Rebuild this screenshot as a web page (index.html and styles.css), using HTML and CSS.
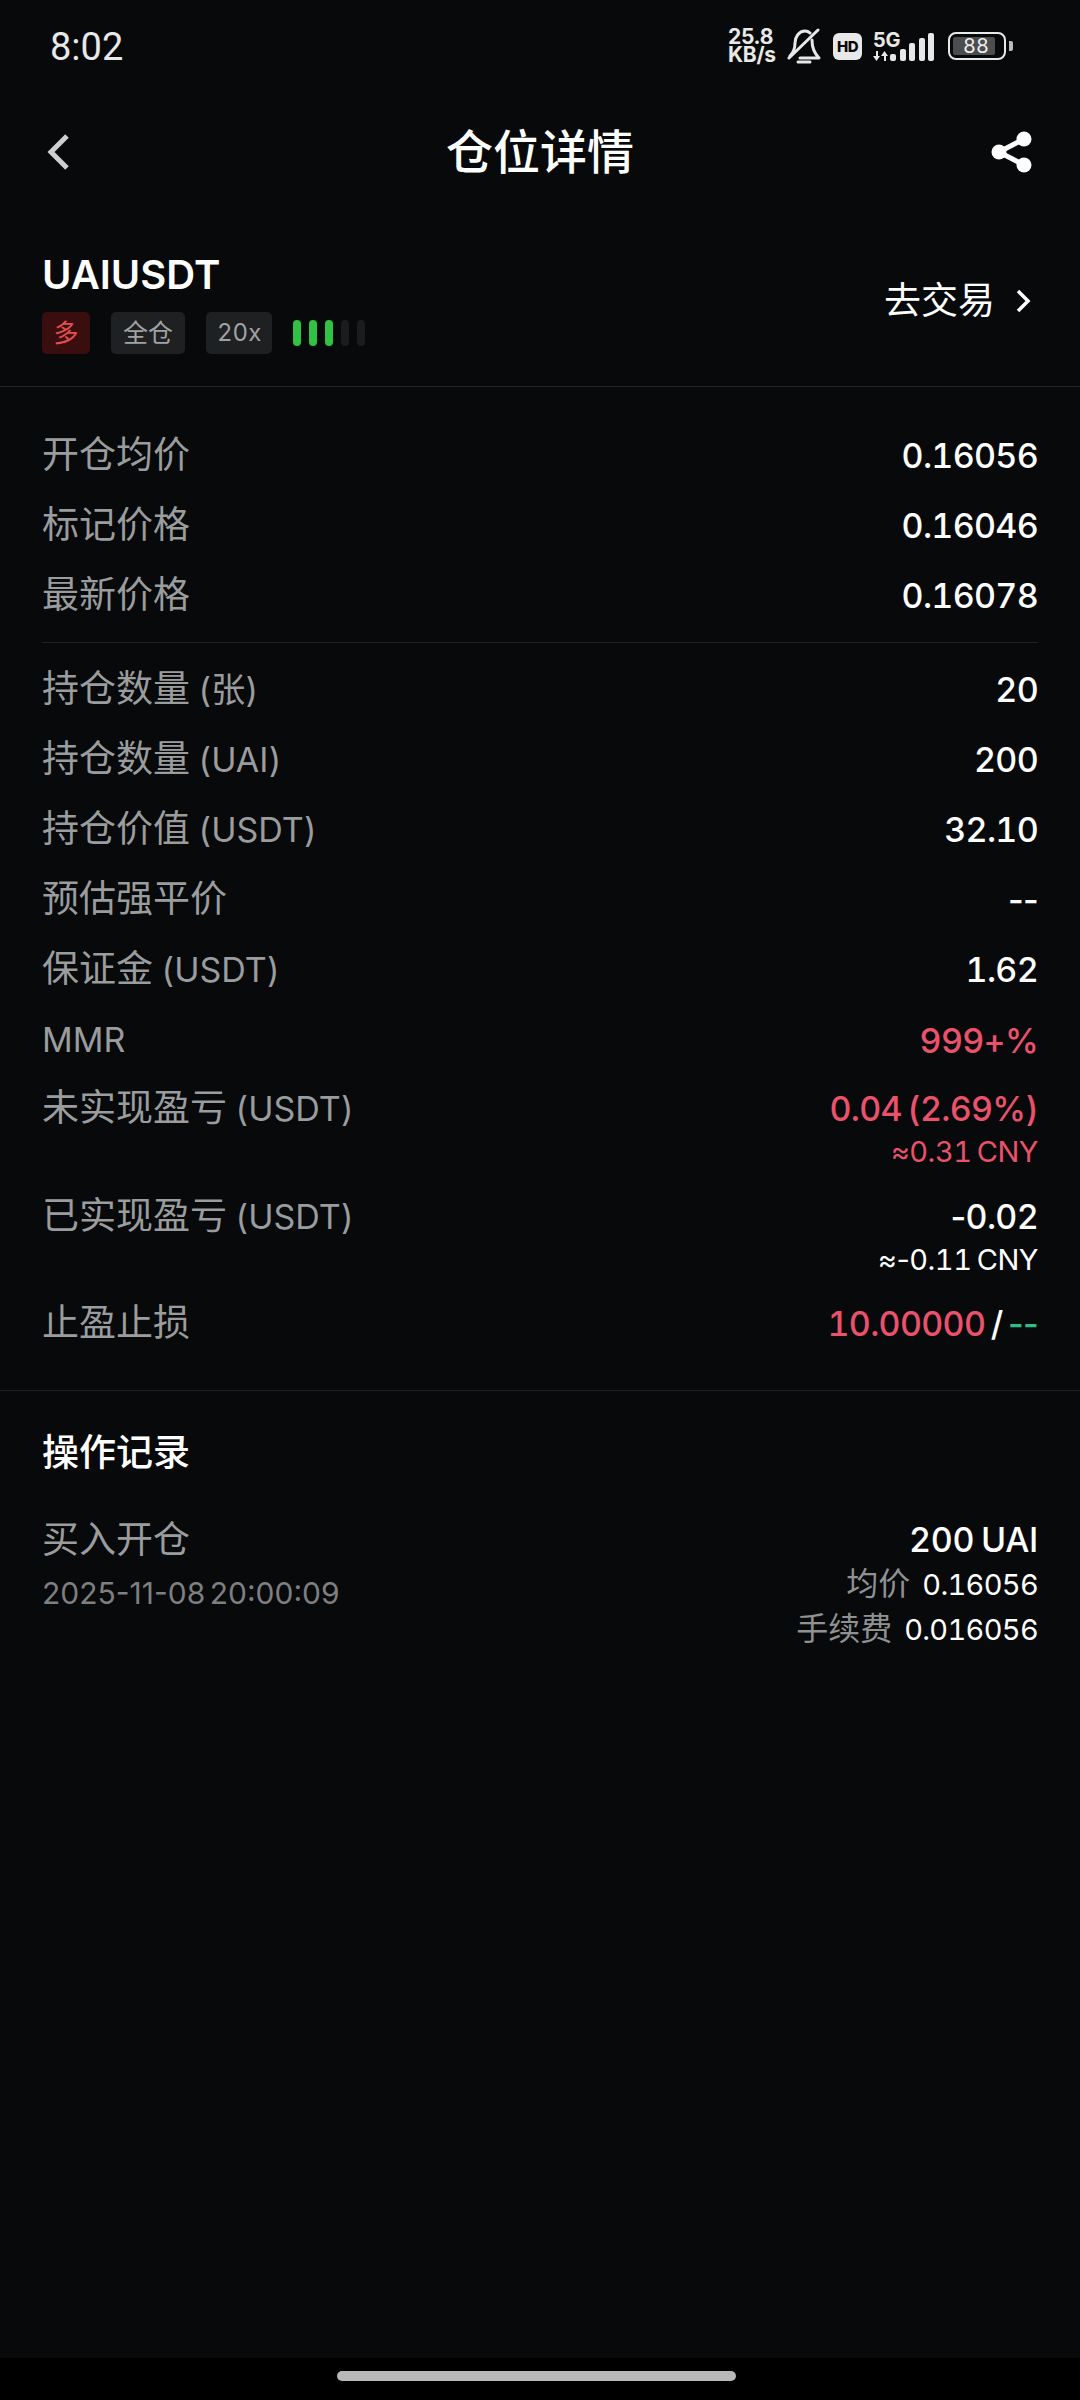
FILE: index.html
```html
<!DOCTYPE html>
<html lang="zh-CN">
<head>
  <meta charset="UTF-8" />
  <meta name="viewport" content="width=device-width, initial-scale=1.0" />
  <title>仓位详情</title>
  <link rel="stylesheet" href="styles.css">
</head>
<body>
  <div class="status-bar">
    <span class="clock">8:02</span>
    <div class="status-icons">
      <div class="speed">25.8<br>KB/s</div>
      <svg class="bell" viewBox="0 0 34 36" fill="none" stroke="#e8e8e8" stroke-width="3" stroke-linecap="round" stroke-linejoin="round">
        <path d="M8 15c0-6 4-12 10-12 2 0 4 1 5 2M25 12c0 7 2 13 7 18H13M8 15c0 6-2 10-5 13"/>
        <path d="M11 34h12"/>
        <path d="M2 30 31 2"/>
      </svg>
      <div class="hd">HD</div>
      <div class="network">
        <div class="net-labels">
          <span class="five-g">5G</span>
          <svg class="net-arrows" viewBox="0 0 15 10" fill="#e8e8e8"><path d="M0 5h3V0h2v5h2l-3.500 5zM8 5l3.500-5L15 5h-2v5h-2V5z"/></svg>
        </div>
        <div class="signal">
          <i class="b1"></i><i class="b2"></i><i class="b3"></i><i class="b4"></i><i class="b5"></i>
        </div>
      </div>
      <div class="battery">
        <div class="battery-body"><span class="battery-level">88</span></div>
        <div class="battery-nub"></div>
      </div>
    </div>
  </div>

  <header class="topbar">
    <svg class="back" viewBox="0 0 22 36" fill="none" stroke="#cfcfcf" stroke-width="5"><path d="M20 2 4 18l16 16"/></svg>
    <h1>仓位详情</h1>
    <svg class="share" viewBox="0 0 42 42" fill="#fff">
      <circle cx="33" cy="8" r="7.500"/><circle cx="33" cy="34" r="7.500"/><circle cx="8" cy="21" r="7.500"/>
      <path d="M8 21 33 8M8 21l25 13" stroke="#fff" stroke-width="5"/>
    </svg>
  </header>

  <section class="symbol">
    <div>
      <div class="symbol-name">UAIUSDT</div>
      <div class="tags">
        <span class="tag tag-long">多</span>
        <span class="tag">全仓</span>
        <span class="tag tag-lever">20x</span>
        <div class="risk">
          <i class="on"></i><i class="on"></i><i class="on"></i><i></i><i></i>
        </div>
      </div>
    </div>
    <div class="trade-link">
      去交易
      <svg viewBox="0 0 16 24" fill="none" stroke="#fff" stroke-width="3.500"><path d="M3 2l10 10L3 22"/></svg>
    </div>
  </section>

  <main class="details">
    <div class="group group-prices">
      <div class="row"><span class="label">开仓均价</span><span class="value">0.16056</span></div>
      <div class="row"><span class="label">标记价格</span><span class="value">0.16046</span></div>
      <div class="row"><span class="label">最新价格</span><span class="value">0.16078</span></div>
    </div>
    <div class="inner-line"></div>
    <div class="group group-position">
      <div class="row"><span class="label">持仓数量 <span class="unit">(张)</span></span><span class="value">20</span></div>
      <div class="row"><span class="label">持仓数量 <span class="unit">(UAI)</span></span><span class="value">200</span></div>
      <div class="row"><span class="label">持仓价值 <span class="unit">(USDT)</span></span><span class="value">32.10</span></div>
      <div class="row"><span class="label">预估强平价</span><span class="value plain">--</span></div>
      <div class="row"><span class="label">保证金 <span class="unit">(USDT)</span></span><span class="value">1.62</span></div>
      <div class="row row-short"><span class="label unit">MMR</span><span class="value red">999+%</span></div>
      <div class="row row-tall">
        <span class="label">未实现盈亏 <span class="unit">(USDT)</span></span>
        <div class="value-stack">
          <span class="value red">0.04 (2.69%)</span>
          <span class="sub red">≈0.31 CNY</span>
        </div>
      </div>
      <div class="row row-tall">
        <span class="label">已实现盈亏 <span class="unit">(USDT)</span></span>
        <div class="value-stack">
          <span class="value"><span class="plain">-</span>0.02</span>
          <span class="sub"><span class="plain">≈-</span>0.11 CNY</span>
        </div>
      </div>
      <div class="row">
        <span class="label">止盈止损</span>
        <span class="value"><span class="red">10.00000</span> / <span class="green plain">--</span></span>
      </div>
    </div>
  </main>

  <section class="records">
    <h2>操作记录</h2>
    <div class="record">
      <div>
        <div class="record-type">买入开仓</div>
        <div class="record-time">2025-11-08 20:00:09</div>
      </div>
      <div class="record-info">
        <div class="record-amount">200 UAI</div>
        <div class="record-line"><span class="record-key">均价</span>0.16056</div>
        <div class="record-line"><span class="record-key">手续费</span>0.016056</div>
      </div>
    </div>
  </section>

  <div class="nav-bar"><div class="nav-pill"></div></div>
</body>
</html>
```

FILE: styles.css
```css
html, body {
  margin: 0;
  padding: 0;
  width: 1080px;
  height: 2400px;
  overflow: hidden;
}
body {
  display: flex;
  flex-direction: column;
  background: #07090a;
  color: #fff;
  font-family: Inter, "Noto Sans CJK SC", sans-serif;
  font-variant-numeric: tabular-nums;
}
.plain {
  font-variant-numeric: normal;
  font-feature-settings: "tnum" 0;
}

.status-bar {
  height: 92px;
  box-sizing: border-box;
  padding: 0 67px 0 50px;
  display: flex;
  align-items: center;
  justify-content: space-between;
  color: #e8e8e8;
}
.clock {
  font-size: 38px;
  font-family: Roboto, sans-serif;
  padding-top: 2px;
}
.status-icons {
  display: flex;
  align-items: center;
}
.speed {
  font-size: 21px;
  font-weight: 700;
  line-height: 18px;
  width: 59px;
  letter-spacing: -0.3px;
  font-variant-numeric: normal;
}
.bell {
  width: 34px;
  height: 36px;
  margin-right: 12px;
}
.hd {
  width: 29px;
  height: 27px;
  border-radius: 6px;
  background: #e8e8e8;
  color: #07090a;
  font-size: 15px;
  font-weight: 800;
  line-height: 27px;
  text-align: center;
  letter-spacing: -0.5px;
  margin-right: 11px;
}
.network {
  display: flex;
  align-items: flex-end;
}
.net-labels {
  width: 17px;
  display: flex;
  flex-direction: column;
  gap: 3px;
}
.five-g {
  font-size: 20px;
  font-weight: 700;
  line-height: 16px;
  letter-spacing: -0.5px;
  white-space: nowrap;
}
.net-arrows {
  width: 15px;
  height: 10px;
}
.signal {
  display: flex;
  align-items: flex-end;
  gap: 3.500px;
}
.signal i {
  width: 6px;
  background: #e8e8e8;
  border-radius: 2px;
}
.signal .b1 { height: 7px; }
.signal .b2 { height: 12px; }
.signal .b3 { height: 18px; }
.signal .b4 { height: 23px; }
.signal .b5 { height: 28px; }
.battery {
  display: flex;
  align-items: center;
  margin-left: 14px;
}
.battery-body {
  width: 58px;
  height: 28px;
  box-sizing: border-box;
  border: 2.500px solid #e8e8e8;
  border-radius: 8px;
  padding: 3px;
  display: flex;
}
.battery-level {
  width: 42px;
  background: #4b4d4e;
  border-radius: 2px;
  font-size: 20px;
  line-height: 18px;
  text-align: center;
  color: #f0f0f0;
  padding-left: 4px;
  box-sizing: border-box;
}
.battery-nub {
  width: 4px;
  height: 10px;
  margin-left: 3px;
  background: #bbb;
  border-radius: 0 2px 2px 0;
}

.topbar {
  height: 120px;
  box-sizing: border-box;
  padding: 0 47px;
  display: grid;
  grid-template-columns: 1fr auto 1fr;
  align-items: center;
}
.topbar h1 {
  margin: 0;
  font-size: 47px;
  font-weight: 500;
  line-height: 60px;
}
.back {
  width: 22px;
  height: 36px;
}
.share {
  width: 42px;
  height: 42px;
  justify-self: end;
}

.symbol {
  height: 175px;
  box-sizing: border-box;
  padding: 40px 42px 0;
  display: flex;
  justify-content: space-between;
  align-items: flex-start;
  border-bottom: 1px solid #232527;
}
.symbol-name {
  font-size: 40px;
  font-weight: 600;
  line-height: 46px;
}
.tags {
  margin-top: 14px;
  display: flex;
  align-items: center;
  gap: 21px;
}
.tag {
  height: 42px;
  padding: 0 12px;
  border-radius: 5px;
  background: #1e2022;
  color: #a0a2a4;
  font-size: 25px;
  line-height: 42px;
}
.tag-long {
  background: #3a0e0e;
  color: #e0504f;
  padding: 0 11.500px;
}
.tag-lever {
  padding: 0 11px;
  font-size: 24px;
}
.risk {
  display: flex;
  gap: 8px;
}
.risk i {
  width: 8px;
  height: 26px;
  border-radius: 4px;
  background: #1a1c1d;
}
.risk .on {
  background: #2fc244;
}
.trade-link {
  margin-top: 27px;
  display: flex;
  align-items: center;
  gap: 20px;
  font-size: 37px;
  line-height: 44px;
}
.trade-link svg {
  width: 16px;
  height: 24px;
  margin-right: 7px;
}

.details {
  padding: 33px 42px 32px;
  border-bottom: 1px solid #1f2123;
}
.inner-line {
  height: 1px;
  background: #1f2123;
  margin: 11px 0;
}
.row {
  height: 70.200px;
  display: flex;
  justify-content: space-between;
  align-items: flex-start;
}
.row-short {
  height: 68.500px;
}
.row-tall {
  height: 107.500px;
}
.label {
  color: #9a9c9e;
  font-size: 37px;
  line-height: 70px;
  word-spacing: -2px;
}
.unit {
  font-size: 34px;
}
.value {
  font-size: 34px;
  font-weight: 500;
  line-height: 72px;
  letter-spacing: -0.7px;
  word-spacing: -3px;
}
.value-stack {
  display: flex;
  flex-direction: column;
  align-items: flex-end;
}
.value-stack .value {
  height: 60px;
}
.sub {
  font-size: 29px;
  line-height: 38px;
  letter-spacing: -0.5px;
  word-spacing: -2px;
}
.red { color: #e9526a; }
.green { color: #2ebd85; }

.records {
  padding: 0 42px;
  flex: 1;
}
.records h2 {
  margin: 40px 0 0;
  font-size: 37px;
  font-weight: 500;
  line-height: 44px;
}
.record {
  margin-top: 43px;
  display: flex;
  justify-content: space-between;
  align-items: flex-start;
}
.record-type {
  color: #9a9c9e;
  font-size: 37px;
  line-height: 44px;
}
.record-time {
  margin-top: 9px;
  color: #7d7f81;
  font-size: 30px;
  line-height: 44px;
  word-spacing: -4px;
  font-variant-numeric: normal;
}
.record-info {
  text-align: right;
}
.record-amount {
  font-size: 34px;
  font-weight: 500;
  line-height: 44px;
  letter-spacing: -0.3px;
  word-spacing: -2px;
}
.record-line {
  font-size: 29px;
  line-height: 44px;
  letter-spacing: -0.7px;
}
.record-key {
  color: #8f9193;
  font-size: 32px;
  letter-spacing: 0;
  margin-right: 12px;
}

.nav-bar {
  height: 42px;
  background: #000;
  display: flex;
  justify-content: center;
  padding-top: 13px;
  box-sizing: border-box;
}
.nav-pill {
  width: 399px;
  height: 10px;
  border-radius: 5px;
  background: #b8b8b8;
  margin-right: 8px;
}
```
